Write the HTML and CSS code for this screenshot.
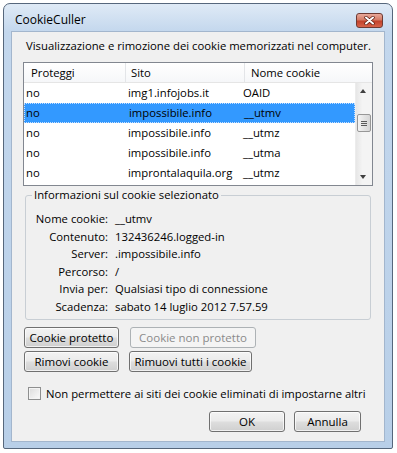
FILE: index.html
```html
<!DOCTYPE html>
<html>
<head>
    <meta charset="UTF-8">
    <title>CookieCuller</title>
    <link rel="stylesheet" href="styles.css">
</head>
<body>
<div class="window">
    <!-- barra del titolo -->
    <div class="titlebar">
        <span class="titleText">CookieCuller</span>
        <span class="closeBtn">
            <svg width="13" height="9" viewBox="0 0 13 9">
                <path d="M3 1.5 L10 7.5 M10 1.5 L3 7.5" stroke="#5a1a10" stroke-width="3.4" stroke-linecap="round"/>
                <path d="M3 1.5 L10 7.5 M10 1.5 L3 7.5" stroke="#ffffff" stroke-width="2" stroke-linecap="round"/>
            </svg>
        </span>
    </div>

    <div class="client">
        <div class="intro">Visualizzazione e rimozione dei cookie memorizzati nel computer.</div>

        <!-- lista dei cookie -->
        <div class="cookieList">
            <div class="listHead">
                <div class="headCell colProt">Proteggi</div>
                <div class="headCell colSite">Sito</div>
                <div class="headCell colName">Nome cookie</div>
            </div>
            <div class="listBody">
                <div class="rows">
                    <div class="row"><span>no</span><span>img1.infojobs.it</span><span>OAID</span></div>
                    <div class="row selected"><span>no</span><span>impossibile.info</span><span>__utmv</span></div>
                    <div class="row"><span>no</span><span>impossibile.info</span><span>__utmz</span></div>
                    <div class="row"><span>no</span><span>impossibile.info</span><span>__utma</span></div>
                    <div class="row"><span>no</span><span>improntalaquila.org</span><span>__utmz</span></div>
                </div>
                <div class="scrollbar">
                    <div class="arrowUp"></div>
                    <div class="track">
                        <div class="thumb"><i></i><i></i><i></i></div>
                    </div>
                    <div class="arrowDown"></div>
                </div>
            </div>
        </div>

        <!-- dettagli del cookie -->
        <fieldset class="infoBox">
            <legend>Informazioni sul cookie selezionato</legend>
            <div class="infoGrid">
                <span class="infoLabel">Nome cookie:</span><span>__utmv</span>
                <span class="infoLabel">Contenuto:</span><span>132436246.logged-in</span>
                <span class="infoLabel">Server:</span><span>.impossibile.info</span>
                <span class="infoLabel">Percorso:</span><span>/</span>
                <span class="infoLabel">Invia per:</span><span>Qualsiasi tipo di connessione</span>
                <span class="infoLabel">Scadenza:</span><span>sabato 14 luglio 2012 7.57.59</span>
            </div>
        </fieldset>

        <div class="btnRow first">
            <button class="winBtn w95">Cookie protetto</button>
            <button class="winBtn w126" disabled>Cookie non protetto</button>
        </div>
        <div class="btnRow second">
            <button class="winBtn w95">Rimovi cookie</button>
            <button class="winBtn w123">Rimuovi tutti i cookie</button>
        </div>

        <label class="checkRow">
            <span class="checkBox"></span>
            <span>Non permettere ai siti dei cookie eliminati di impostarne altri</span>
        </label>

        <div class="dialogBtns">
            <button class="winBtn okBtn">OK</button>
            <button class="winBtn cancelBtn">Annulla</button>
        </div>
    </div>
</div>
</body>
</html>
```

FILE: styles.css
```css
/* pagina */
body {
    margin: 0;
    background: #ffffff;
    font-family: "Open Sans", "Noto Sans", sans-serif;
    font-size: 11.3px;
    color: #000000;
}

/* cornice della finestra */
.window {
    box-sizing: border-box;
    margin: 3px 0 0 3px;
    width: 390px;
    height: 446px;
    border: 1px solid #56677c;
    border-radius: 7px 7px 2px 2px;
    background: linear-gradient(#dfeaf6, #c3d7ed 28px, #b8cfe8);
    padding: 0 7px 6px 7px;
    display: flex;
    flex-direction: column;
}

.titlebar {
    height: 27px;
    box-sizing: border-box;
    padding: 5px 2px 0 4px;
    display: flex;
    align-items: center;
    justify-content: space-between;
}

.titleText {
    font-size: 12px;
    line-height: 16px;
}

.closeBtn {
    box-sizing: border-box;
    width: 27px;
    height: 15px;
    border: 1px solid #6e3a33;
    border-radius: 3px;
    background: linear-gradient(#e9a99a, #d47b66 45%, #c2422b 55%, #d7634a);
    display: flex;
    align-items: center;
    justify-content: center;
}

/* area client */
.client {
    flex: 1;
    background: #f0f0f0;
    border: 1px solid #a3b6cd;
    display: flex;
    flex-direction: column;
}

.intro {
    margin: 6px 0 0 14px;
    line-height: 16px;
    white-space: nowrap;
}

/* lista */
.cookieList {
    box-sizing: border-box;
    margin: 8px 0 0 11px;
    width: 350px;
    height: 124px;
    border: 1px solid #828790;
    background: #ffffff;
}

.listHead {
    display: flex;
    height: 19px;
    border-bottom: 1px solid #e5e5e5;
    background: linear-gradient(#ffffff, #f6f7f9);
}

.headCell {
    line-height: 19px;
    box-sizing: border-box;
}

.colProt {
    width: 102px;
    padding-left: 7px;
    border-right: 1px solid #e3e5e8;
}

.colSite {
    width: 119px;
    padding-left: 5px;
    border-right: 1px solid #e3e5e8;
}

.colName {
    flex: 1;
    padding-left: 6px;
}

.listBody {
    display: flex;
    height: 102px;
}

.rows {
    flex: 1;
}

.row {
    display: grid;
    grid-template-columns: 102px 115px 1fr;
    height: 20px;
    line-height: 20px;
    box-sizing: border-box;
}

.row span {
    padding-left: 2px;
}

.row.selected {
    background: #3399ff;
    border: 1px dotted #c7e0ff;
    line-height: 18px;
}

.row.selected span:first-child {
    padding-left: 1px;
}

/* barra di scorrimento */
.scrollbar {
    width: 17px;
    display: flex;
    flex-direction: column;
    background: linear-gradient(90deg, #e6e6e6, #f4f4f4 40%, #f4f4f4);
    border-left: 1px solid #ececec;
    box-sizing: border-box;
}

.arrowUp,
.arrowDown {
    height: 17px;
    position: relative;
}

.arrowUp::after,
.arrowDown::after {
    content: "";
    position: absolute;
    left: 4px;
    width: 0;
    height: 0;
    border-left: 3.5px solid transparent;
    border-right: 3.5px solid transparent;
}

.arrowUp::after {
    top: 6px;
    border-bottom: 4px solid #404040;
}

.arrowDown::after {
    top: 7px;
    border-top: 4px solid #404040;
}

.track {
    flex: 1;
    padding-top: 14px;
}

.thumb {
    box-sizing: border-box;
    margin-left: 1px;
    width: 14px;
    height: 18px;
    border: 1px solid #979797;
    border-radius: 2px;
    background: linear-gradient(90deg, #f4f4f4, #e4e4e4 50%, #d6d6d6);
    display: flex;
    flex-direction: column;
    align-items: center;
    justify-content: center;
    gap: 1px;
}

.thumb i {
    display: block;
    width: 6px;
    height: 1px;
    background: #5a5a5a;
}

/* gruppo informazioni */
.infoBox {
    box-sizing: border-box;
    margin: 1px 0 0 13px;
    width: 346px;
    padding: 7px 0 3px 0;
    border: 1px solid #c8ced4;
    border-radius: 3px;
    min-width: 0;
}

.infoBox legend {
    margin-left: 6px;
    padding: 0 2px;
    line-height: 16px;
}

.infoGrid {
    display: grid;
    grid-template-columns: 82px 1fr;
    column-gap: 7px;
    line-height: 17.6px;
}

.infoLabel {
    text-align: right;
}

/* pulsanti */
.btnRow {
    display: flex;
    margin-left: 12px;
}

.btnRow.first {
    margin-top: 7px;
    gap: 11px;
}

.btnRow.second {
    margin-top: 3px;
    gap: 10px;
}

.winBtn {
    box-sizing: border-box;
    height: 21px;
    padding: 0;
    font-family: "Open Sans", "Noto Sans", sans-serif;
    font-size: 11.5px;
    color: #000000;
    border: 1px solid #707070;
    border-radius: 3px;
    background: linear-gradient(#f3f3f3, #ebebeb 45%, #dddddd 55%, #cfcfcf);
    box-shadow: inset 0 0 0 1px rgba(255, 255, 255, 0.7);
}

.winBtn:disabled {
    color: #8b8b8b;
    border-color: #adb2b5;
    background: #f4f4f4;
    box-shadow: none;
}

.w95 {
    width: 95px;
}

.w126 {
    width: 126px;
}

.w123 {
    width: 123px;
}

/* casella di controllo */
.checkRow {
    display: flex;
    align-items: center;
    gap: 5px;
    margin: 15px 0 0 16px;
    line-height: 14px;
    white-space: nowrap;
}

.checkBox {
    box-sizing: border-box;
    width: 13px;
    height: 13px;
    border: 1px solid #8e8f8f;
    background: linear-gradient(135deg, #dcdcdc, #fbfbfb);
    box-shadow: inset 0 0 0 1px #f4f4f4;
}

.dialogBtns {
    display: flex;
    justify-content: flex-end;
    gap: 9px;
    margin: 10px 23px 0 0;
}

.okBtn {
    width: 76px;
}

.cancelBtn {
    width: 67px;
}
```
